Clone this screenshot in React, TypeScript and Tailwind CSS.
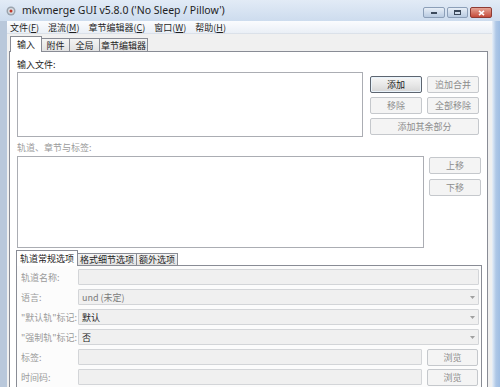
import React from 'react';

const cjk = "font-['Noto_Sans_CJK_SC','Noto_Sans',sans-serif]";

function Btn({ label, w, primary, disabled = true }: { label: string; w: string; primary?: boolean; disabled?: boolean }) {
  return (
    <div
      className={`${w} h-[17px] shrink-0 flex items-center justify-center rounded-[2px] border text-[9px] leading-none ${
        primary
          ? 'border-[#5d6570] bg-gradient-to-b from-[#f6f6f6] via-[#e8e8e8] to-[#d6d6d6] text-[#1a1a1a] shadow-[inset_0_0_0_1px_#e9f3fb]'
          : disabled
          ? 'border-[#c5c8cc] bg-[#f4f4f4] text-[#8c8c8c]'
          : 'border-[#707070] bg-[#e9e9e9] text-[#1a1a1a]'
      }`}
    >
      {label}
    </div>
  );
}

function Field({ value, combo, dark }: { value?: string; combo?: boolean; dark?: boolean }) {
  return (
    <div className="flex-1 h-[16px] flex items-center border border-[#d3d5d8] rounded-[1px] bg-[#f0f0f0] px-[3px]">
      <span className={`text-[9px] leading-none ${dark ? 'text-[#222]' : 'text-[#7a7a7a]'}`}>{value}</span>
      {combo && (
        <svg className="ml-auto" width="5" height="3" viewBox="0 0 5 3">
          <path d="M0 0h5L2.5 3z" fill="#a0a0a0" />
        </svg>
      )}
    </div>
  );
}

function Row({ label, children }: { label: string; children: React.ReactNode }) {
  return (
    <div className="flex items-center h-[16px] shrink-0">
      <div className="w-[57px] text-[9px] leading-none text-[#9a9a9a] whitespace-nowrap">{label}</div>
      <div className="flex flex-1 items-center gap-[5px]">{children}</div>
    </div>
  );
}

export default function App() {
  return (
    <div className={`w-[500px] h-[387px] overflow-hidden flex flex-col bg-[#bccde3] ${cjk}`}>
      {/* title bar */}
      <div className="h-[21px] shrink-0 flex items-center bg-gradient-to-b from-[#e2ebf6] to-[#cddcee] pl-[6px] pr-[8px]">
        <svg width="10" height="10" viewBox="0 0 10 10" className="mr-[6px]">
          <circle cx="5" cy="5" r="4.5" fill="#9aa3ad" />
          <circle cx="5" cy="5" r="3" fill="#d8dde2" />
          <circle cx="5" cy="5" r="1.5" fill="#c0392b" />
        </svg>
        <span className="font-['Noto_Sans',sans-serif] text-[10.5px] text-[#1e1e1e] leading-none whitespace-nowrap">
          mkvmerge GUI v5.8.0 ('No Sleep / Pillow')
        </span>
        <div className="ml-auto flex items-center gap-[2px] mt-[4px]">
          <div className="w-[22px] h-[11px] rounded-[2px] border border-[#8c9fb8] bg-gradient-to-b from-[#e7eef7] to-[#b9cbe1] flex items-end justify-center pb-[3px]">
            <div className="w-[6px] h-[2px] bg-[#3c4a5c]" />
          </div>
          <div className="w-[21px] h-[11px] rounded-[2px] border border-[#8c9fb8] bg-gradient-to-b from-[#e7eef7] to-[#b9cbe1] flex items-center justify-center">
            <div className="w-[7px] h-[5px] border border-[#3c4a5c] border-t-2" />
          </div>
          <div className="w-[22px] h-[11px] rounded-[2px] border border-[#8e3b33] bg-gradient-to-b from-[#e5a395] to-[#c44a3a] flex items-center justify-center">
            <svg width="7" height="6" viewBox="0 0 7 6">
              <path d="M1 0.8L6 5.2M6 0.8L1 5.2" stroke="#fff" strokeWidth="1.6" />
            </svg>
          </div>
        </div>
      </div>

      <div className="flex flex-1 min-h-0">
        <div className="w-[7px] shrink-0 bg-[#b9c8db]" />
        <div className="flex-1 min-w-0 flex flex-col bg-[#f0f0f0]">
          {/* menu bar */}
          <div className="h-[13px] shrink-0 flex items-center gap-[9px] pl-[3px] bg-gradient-to-b from-[#fbfcfe] to-[#eaeff6] border-b border-[#dbe1e9] text-[9px] leading-none text-[#1e1e1e]">
            <span>文件(<u>F</u>)</span>
            <span>混流(<u>M</u>)</span>
            <span>章节编辑器(<u>C</u>)</span>
            <span>窗口(<u>W</u>)</span>
            <span>帮助(<u>H</u>)</span>
          </div>

          {/* main tabs */}
          <div className="flex flex-col flex-1 min-h-0 pl-[2px] pr-[4px] pt-[2px]">
            <div className="flex shrink-0 items-end h-[15px] pl-[1px] text-[9px] leading-none text-[#1e1e1e]">
              <div className="h-[16px] w-[32px] -mb-[1px] bg-white border border-b-0 border-[#898c95] flex items-center justify-center relative z-10">输入</div>
              <div className="h-[13px] w-[28px] bg-gradient-to-b from-[#f4f4f4] to-[#e2e2e2] border border-l-0 border-b-0 border-[#898c95] flex items-center justify-center">附件</div>
              <div className="h-[13px] w-[30px] bg-gradient-to-b from-[#f4f4f4] to-[#e2e2e2] border border-l-0 border-b-0 border-[#898c95] flex items-center justify-center">全局</div>
              <div className="h-[13px] w-[48px] bg-gradient-to-b from-[#f4f4f4] to-[#e2e2e2] border border-l-0 border-b-0 border-[#898c95] flex items-center justify-center">章节编辑器</div>
            </div>
            <div className="flex-1 min-h-0 bg-white border border-[#898c95] border-b-0 pl-[7px] pr-[6px] pt-[6px] flex flex-col overflow-hidden">
              <div className="h-[12px] shrink-0 flex items-center text-[9px] leading-none text-[#1e1e1e]">输入文件:</div>
              <div className="flex shrink-0 mt-[2px] gap-[7px]">
                <div className="w-[346px] h-[65px] border border-[#abadb3] bg-white" />
                <div className="flex flex-col gap-[4px] pt-[4px]">
                  <div className="flex gap-[5px]">
                    <Btn label="添加" w="w-[52px]" primary disabled={false} />
                    <Btn label="追加合并" w="w-[52px]" />
                  </div>
                  <div className="flex gap-[5px]">
                    <Btn label="移除" w="w-[52px]" />
                    <Btn label="全部移除" w="w-[52px]" />
                  </div>
                  <Btn label="添加其余部分" w="w-[109px]" />
                </div>
              </div>

              <div className="h-[12px] shrink-0 mt-[4px] flex items-center text-[9px] leading-none text-[#9a9a9a]">轨道、章节与标签:</div>
              <div className="flex shrink-0 mt-[3px] gap-[5px]">
                <div className="w-[407px] h-[92px] border border-[#abadb3] bg-white" />
                <div className="flex flex-col gap-[5px] pt-[1px]">
                  <Btn label="上移" w="w-[52px]" />
                  <Btn label="下移" w="w-[52px]" />
                </div>
              </div>

              {/* inner tabs */}
              <div className="mt-[2px] shrink-0 -ml-[1px] w-[466px] flex flex-col">
                <div className="flex shrink-0 items-end h-[15px] text-[9px] leading-none text-[#1e1e1e]">
                  <div className="h-[16px] w-[62px] -mb-[1px] bg-white border border-b-0 border-[#898c95] flex items-center justify-center relative z-10">轨道常规选项</div>
                  <div className="h-[12px] w-[59px] bg-gradient-to-b from-[#f4f4f4] to-[#e2e2e2] border border-l-0 border-b-0 border-[#898c95] flex items-center justify-center">格式细节选项</div>
                  <div className="h-[12px] w-[41px] bg-gradient-to-b from-[#f4f4f4] to-[#e2e2e2] border border-l-0 border-b-0 border-[#898c95] flex items-center justify-center">额外选项</div>
                </div>
                <div className="shrink-0 border border-[#898c95] border-b-0 bg-[#fcfcfc] pl-[4px] pr-[2px] pt-[3px] flex flex-col gap-[4px] h-[140px]">
                  <Row label="轨道名称:"><Field /></Row>
                  <Row label="语言:"><Field value="und (未定)" combo /></Row>
                  <Row label={'"默认轨"标记:'}><Field value="默认" combo dark /></Row>
                  <Row label={'"强制轨"标记:'}><Field value="否" combo dark /></Row>
                  <Row label="标签:">
                    <Field />
                    <Btn label="浏览" w="w-[51px] mr-[1px]" />
                  </Row>
                  <Row label="时间码:">
                    <Field />
                    <Btn label="浏览" w="w-[51px] mr-[1px]" />
                  </Row>
                </div>
              </div>
            </div>
          </div>
        </div>
        <div className="w-[8px] shrink-0 bg-gradient-to-r from-[#e9f0f8] via-[#aec7e6] to-[#9fbde3]" />
      </div>
    </div>
  );
}
